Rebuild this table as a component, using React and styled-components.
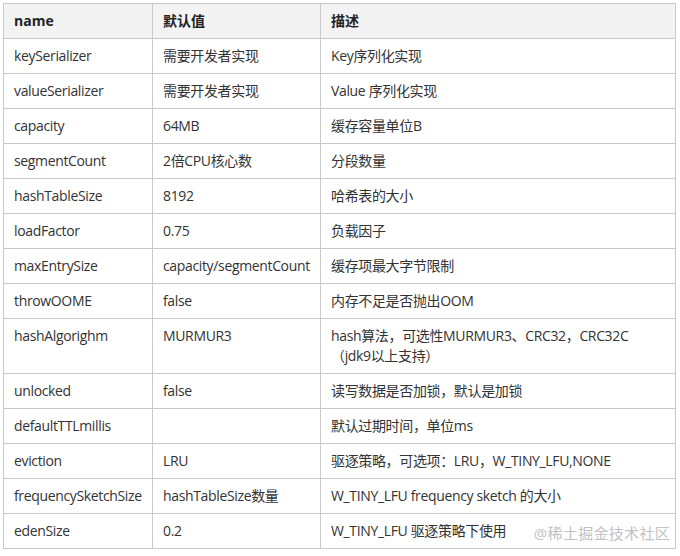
import React from 'react';
import styled, {createGlobalStyle} from 'styled-components';

const GlobalStyle = createGlobalStyle`
  html, body {
    margin: 0;
    padding: 0;
    background: #ffffff;
  }
`;

const Page = styled.div`
  position: relative;
  width: 680px;
  height: 556px;
  padding: 3px 0 0 3px;
  box-sizing: border-box;
  background: #fff;
  font-family: "Open Sans", "Noto Sans CJK SC", sans-serif;
  font-size: 14px;
  color: #333;
`;

const Table = styled.table`
  border-collapse: collapse;
  table-layout: fixed;
  width: 672px;
`;

const HeadCell = styled.th`
  background: #f3f3f3;
  border: 1px solid #c9c9c9;
  padding: 7px 10px;
  line-height: 20px;
  text-align: left;
  font-weight: 700;
  color: #222;
`;

const Cell = styled.td`
  border: 1px solid #c9c9c9;
  padding: 7px 10px;
  line-height: 20px;
  vertical-align: top;
  white-space: nowrap;
  letter-spacing: -0.35px;
`;

const Watermark = styled.div`
  position: absolute;
  right: 10px;
  bottom: 13px;
  font-size: 15px;
  color: #c2c2c2;
  letter-spacing: 0.3px;
`;

const ROWS = [
  ['keySerializer', '需要开发者实现', 'Key序列化实现'],
  ['valueSerializer', '需要开发者实现', 'Value 序列化实现'],
  ['capacity', '64MB', '缓存容量单位B'],
  ['segmentCount', '2倍CPU核心数', '分段数量'],
  ['hashTableSize', '8192', '哈希表的大小'],
  ['loadFactor', '0.75', '负载因子'],
  ['maxEntrySize', 'capacity/segmentCount', '缓存项最大字节限制'],
  ['throwOOME', 'false', '内存不足是否抛出OOM'],
  ['hashAlgorighm', 'MURMUR3', ['hash算法，可选性MURMUR3、CRC32，CRC32C', '（jdk9以上支持）']],
  ['unlocked', 'false', '读写数据是否加锁，默认是加锁'],
  ['defaultTTLmillis', '', '默认过期时间，单位ms'],
  ['eviction', 'LRU', '驱逐策略，可选项：LRU，W_TINY_LFU,NONE'],
  ['frequencySketchSize', 'hashTableSize数量', 'W_TINY_LFU frequency sketch 的大小'],
  ['edenSize', '0.2', 'W_TINY_LFU 驱逐策略下使用']
];

function renderDesc(desc) {
  if (!Array.isArray(desc)) return desc;
  return desc.map((line, i) => (
    <React.Fragment key={i}>
      {i > 0 && <br />}
      {line}
    </React.Fragment>
  ));
}

export default function App() {
  return (
    <Page>
      <GlobalStyle />
      <Table>
        <colgroup>
          <col style={{width: 149}} />
          <col style={{width: 168}} />
          <col style={{width: 355}} />
        </colgroup>
        <thead>
          <tr>
            <HeadCell>name</HeadCell>
            <HeadCell>默认值</HeadCell>
            <HeadCell>描述</HeadCell>
          </tr>
        </thead>
        <tbody>
          {ROWS.map(([name, def, desc]) => (
            <tr key={name}>
              <Cell>{name}</Cell>
              <Cell>{def}</Cell>
              <Cell>{renderDesc(desc)}</Cell>
            </tr>
          ))}
        </tbody>
      </Table>
      <Watermark>@稀土掘金技术社区</Watermark>
    </Page>
  );
}
